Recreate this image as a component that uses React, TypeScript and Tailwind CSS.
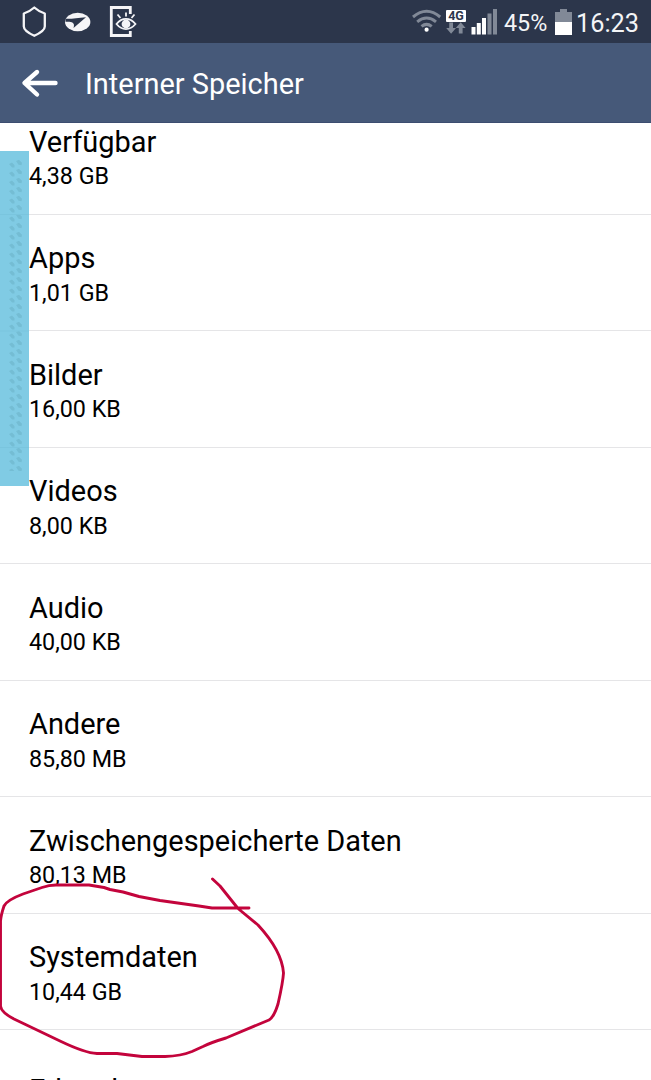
const items = [
  ['Verfügbar', '4,38 GB'],
  ['Apps', '1,01 GB'],
  ['Bilder', '16,00 KB'],
  ['Videos', '8,00 KB'],
  ['Audio', '40,00 KB'],
  ['Andere', '85,80 MB'],
  ['Zwischengespeicherte Daten', '80,13 MB'],
  ['Systemdaten', '10,44 GB'],
];

function StatusBar() {
  return (
    <div className="flex h-[43px] shrink-0 items-center bg-[#2c364b] text-[#f4f5f7]">
      <svg width="160" height="43" viewBox="0 0 160 43" fill="none" className="shrink-0">
        <path d="M34.3 7.500C31 10.500 27.500 12.300 23.800 13.500v13c0 3.500 4.500 6.500 10.500 9.300 6-2.800 10.500-5.800 10.500-9.300v-13C41.100 12.300 37.600 10.500 34.300 7.500Z" stroke="#f5f5f7" strokeWidth="2.300" strokeLinejoin="round" />
        <ellipse cx="77.700" cy="22" rx="12.700" ry="9.200" fill="#f5f5f7" />
        <path d="M65.500 18.800c6 .3 12-.8 20.500-1.600L73.500 28c.8-2.500.7-4-.8-5.200-1.500-1-4-1.300-7.200-1Z" fill="#2c364b" />
        <path d="M130.300 14V7.500H111.300v28H130.300V31" stroke="#f5f5f7" strokeWidth="2.800" />
        <path d="M117.500 14.500l3 3.500M126 12.500v4M134.500 14.500l-3 3.500" stroke="#f5f5f7" strokeWidth="1.800" />
        <path d="M116.500 24c5.500-6.800 13.300-6.800 19 0-5.700 6.800-13.500 6.800-19 0Z" fill="#2c364b" stroke="#f5f5f7" strokeWidth="1.800" />
        <circle cx="126" cy="24" r="4.400" fill="#f5f5f7" />
      </svg>
      <svg width="92" height="43" viewBox="0 0 92 43" fill="none" className="ml-auto shrink-0">
        <g stroke="#818997" strokeWidth="3">
          <path d="M1 17Q14.600 5.500 28.200 17M5.200 21.800Q14.600 14.200 24 21.800M9.500 26.400Q14.600 22.300 19.700 26.400" />
        </g>
        <circle cx="14.600" cy="29.700" r="2.100" fill="#fff" />
        <rect x="34" y="10" width="20" height="12" rx="1" fill="#fff" />
        <text x="44" y="20.400" textAnchor="middle" fontFamily="Roboto, sans-serif" fontSize="12.500" fontWeight="700" fill="#2c364b">4G</text>
        <path d="M37.200 22.500h3.800V28h3l-4.900 5.700L34.200 28h3ZM46.800 33.500V28h-3l4.900-5.700L53.600 28h-3v5.500Z" fill="#818997" />
        <path d="M59.500 27h4v7.500h-4ZM64.800 23h4v11.500h-4ZM70 18h4v16.500h-4Z" fill="#fff" />
        <path d="M75.500 13.500h4v21h-4ZM81 9h4v25.500h-4Z" fill="#818997" />
      </svg>
      <span className="w-[51px] shrink-0 whitespace-nowrap pt-[3px] text-[23.300px] leading-[30px]">45%</span>
      <svg width="21" height="43" viewBox="0 0 21 43" className="shrink-0">
        <path d="M0 12h5V9h7v3h5v23H0Z" fill="#818997" />
        <path d="M0 22h17v13H0Z" fill="#fff" />
      </svg>
      <span className="w-[75px] shrink-0 whitespace-nowrap pt-[4px] text-[25.300px] leading-[32px]">16:23</span>
    </div>
  );
}

export default function App() {
  return (
    <div className="relative flex h-[1080px] w-[651px] flex-col overflow-hidden bg-white font-['Roboto',sans-serif] text-black">
      <StatusBar />
      <header className="flex h-20 shrink-0 items-center border-b border-[#3c4d70] bg-[#465979] text-white">
        <svg width="85" height="80" viewBox="0 0 85 80" fill="none" className="shrink-0">
          <path d="M55.500 40H25M37 29 24.500 40l12.500 11.500" stroke="#fff" strokeWidth="4.400" strokeLinecap="round" strokeLinejoin="round" />
        </svg>
        <h1 className="pt-[3px] text-[28.950px] leading-9">Interner Speicher</h1>
      </header>
      <main className="min-h-0 flex-1 overflow-hidden">
        <div className="-mt-[25px]">
          {items.map(([title, size]) => (
            <section key={title} className="flex h-[116.5px] flex-col border-b border-[#e5e5e7] pl-[29px] pt-[25.5px]">
              <h2 className="text-[28.950px] leading-9">{title}</h2>
              <p className="pt-[0.5px] text-[23.300px] leading-[33px]">{size}</p>
            </section>
          ))}
          <section className="pl-[29px] pt-[42px]">
            <h2 className="text-[28.950px] leading-9">Erkunden</h2>
          </section>
        </div>
      </main>
      <svg className="absolute left-0 top-[151px]" width="29" height="335" viewBox="0 0 29 335">
        <defs>
          <pattern id="grip" x="8" y="8" width="14" height="9" patternUnits="userSpaceOnUse">
            <path d="M1 5l3-1.500 2.500 2.500v2.500L4 8.500ZM8 2l3-1.200 3 3-.500 2.500-3-.500Z" fill="#74bdd4" />
          </pattern>
        </defs>
        <rect width="29" height="335" fill="#80cbe4" />
        <rect x="8" y="8" width="14" height="312" fill="url(#grip)" />
        <path d="M0 63.500H29M0 180H29M0 296.500H29" stroke="#7ac5de" />
      </svg>
      <svg className="absolute left-0 top-[870px]" width="300" height="200" viewBox="0 870 300 200" fill="none">
        <path d="M249 908H212L199 906L160 900.500L139 896.500L123 892L110 889.500L104 887.500L89 885H56Q49 885 42 887.500L23 894Q7 900 4 906Q1 915 .5 921V1006Q1 1012 14 1019L60 1041Q85 1053 97 1053.500H117L142 1056.500H165Q181 1056 192 1051.500L203 1046.500Q211 1042.500 226 1038L269 1020Q274 1017 278 1004Q283 982 283.500 973Q282 951 258 925L238 908.500L220 886L212.500 879" stroke="#c3043c" strokeWidth="2.900" strokeLinecap="round" strokeLinejoin="round" />
      </svg>
    </div>
  );
}
